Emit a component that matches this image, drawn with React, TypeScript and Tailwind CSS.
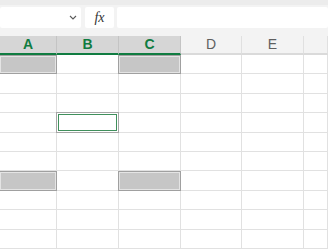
import React from 'react';

const cols = [
  { label: 'A', w: 'w-[57px]', sel: true },
  { label: 'B', w: 'w-[62px]', sel: true },
  { label: 'C', w: 'w-[62px]', sel: true },
  { label: 'D', w: 'w-[61px]', sel: false },
  { label: 'E', w: 'w-[62px]', sel: false },
  { label: '', w: 'flex-1', sel: false },
];

// cells marked as "gray" = highlighted range, "active" = current cell
function cellKind(r: number, c: number) {
  if ((r === 0 || r === 6) && (c === 0 || c === 2)) return 'gray';
  if (r === 3 && c === 1) return 'active';
  return '';
}

export default function App() {
  const rows = Array.from({ length: 10 }, (_, i) => i);

  return (
    <div className="w-[328px] h-[249px] overflow-hidden bg-white font-['Liberation_Sans',Arial,sans-serif]">
      {/* formula bar */}
      <div className="h-[36px] bg-[#f3f3f3] border-t-[5px] border-[#ececec] pt-[2px] flex gap-[4px]">
        <div className="w-[81px] h-[21px] bg-white rounded-[2px] flex items-center justify-end pr-[4px]">
          <svg width="8" height="5" viewBox="0 0 8 5" fill="none">
            <path d="M1 1l3 3 3-3" stroke="#5a5a5a" strokeWidth="1.1" />
          </svg>
        </div>
        <div className="w-[29px] h-[21px] bg-white rounded-[2px] flex items-center justify-center">
          <span className="font-['Liberation_Serif',serif] italic text-[14px] text-[#333] leading-none">fx</span>
        </div>
        <div className="flex-1 h-[21px] bg-white rounded-[2px] ml-[-1px]" />
      </div>

      {/* column headers */}
      <div className="flex h-[19px]">
        {cols.map((c, i) => (
          <div
            key={i}
            className={
              c.w +
              ' shrink-0 flex items-center justify-center text-[14px] border-r ' +
              (c.sel
                ? 'bg-[#d6d6d6] text-[#107c41] font-bold border-[#c4c4c4] border-b-2 border-b-[#107c41]'
                : 'bg-[#f3f3f3] text-[#5f5f5f] border-[#e0e0e0] border-b-2 border-b-[#dadada]')
            }
          >
            {c.label}
          </div>
        ))}
      </div>

      {/* grid */}
      {rows.map((r) => (
        <div key={r} className="flex h-[19.4px]">
          {cols.map((c, ci) => {
            const kind = cellKind(r, ci);
            return (
              <div key={ci} className={c.w + ' shrink-0 relative border-r border-b border-[#e1e1e1]'}>
                {kind === 'gray' && (
                  <div className="absolute inset-[-1px] top-0 bg-[#c6c6c6] border border-[#a0a0a0] shadow-[inset_0_0_0_1px_#e4e4e4]" />
                )}
                {kind === 'active' && (
                  <div className="absolute inset-[-1px] border border-[#a6a6a6] bg-white p-px">
                    <div className="w-full h-full border-[1.5px] border-[#3f8f5c]" />
                  </div>
                )}
              </div>
            );
          })}
        </div>
      ))}
    </div>
  );
}
